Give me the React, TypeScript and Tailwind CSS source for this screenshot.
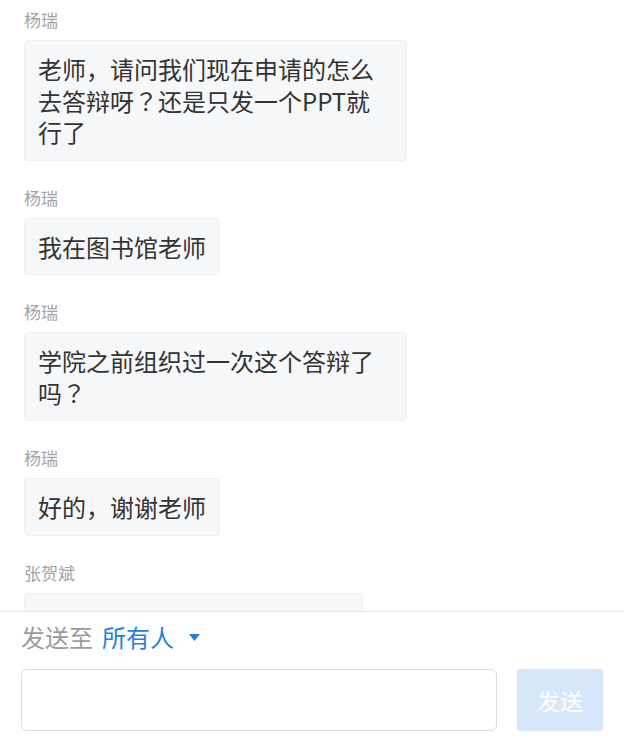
import React from 'react'

type Message = {
  sender: string
  text?: string
}

const messages: Message[] = [
  { sender: '杨瑞', text: '老师，请问我们现在申请的怎么去答辩呀？还是只发一个PPT就行了' },
  { sender: '杨瑞', text: '我在图书馆老师' },
  { sender: '杨瑞', text: '学院之前组织过一次这个答辩了吗？' },
  { sender: '杨瑞', text: '好的，谢谢老师' },
  { sender: '张贺斌' },
]

// the phone font centres the full-width question mark, as the JP face does
const renderText = (text: string) =>
  text.split(/(？)/).map((part, i) =>
    part === '？' ? (
      <span key={i} className="font-['Noto_Sans_CJK_JP',sans-serif]">
        {part}
      </span>
    ) : (
      part
    )
  )

const ChatBubble = ({ message }: { message: Message }) => (
  <div className="flex flex-col items-start">
    <div className="text-[17px] leading-[24px] text-[#a3a3a3] mb-2">{message.sender}</div>
    {message.text ? (
      <div className="max-w-[383px] px-[13px] py-3 rounded-[4px] bg-[#f6f7f9] border border-[#eff0f2] text-[24px] leading-[31.5px] text-[#333333]">
        {renderText(message.text)}
      </div>
    ) : (
      // last message is scrolled under the composer, only its top edge shows
      <div className="w-[339px] h-[57px] rounded-[4px] bg-[#f6f7f9] border border-[#eff0f2]" />
    )}
  </div>
)

export default function App() {
  return (
    <div className="h-[752px] w-[624px] flex flex-col bg-white font-['Noto_Sans_CJK_SC',sans-serif] overflow-hidden">
      {/* Message list */}
      <div className="flex-1 min-h-0 overflow-hidden px-6 pt-2 flex flex-col gap-[25px]">
        {messages.map((message, index) => (
          <ChatBubble key={index} message={message} />
        ))}
      </div>

      {/* Composer */}
      <div className="shrink-0 border-t border-[#e3e3e3] px-[21px] pt-[9px] pb-[21px]">
        <div className="flex items-center h-8 text-[24px] leading-8">
          <span className="text-[#9b9b9b]">发送至</span>
          <button className="ml-[9px] flex items-center text-[#1d7fe6]">
            所有人
            <svg width="11" height="7" viewBox="0 0 11 7" className="ml-[15px]">
              <polygon points="0,0 11,0 5.5,7" fill="#1d7fe6" />
            </svg>
          </button>
        </div>
        <div className="mt-4 flex gap-5">
          <input
            className="flex-1 h-[62px] rounded-[6px] border border-[#dcdcdc] px-3 text-[20px] outline-none"
            aria-label="message"
          />
          <button className="w-[86px] h-[62px] rounded-[3px] bg-[#d6e7fb] text-white text-[23px]">
            发送
          </button>
        </div>
      </div>
    </div>
  )
}
